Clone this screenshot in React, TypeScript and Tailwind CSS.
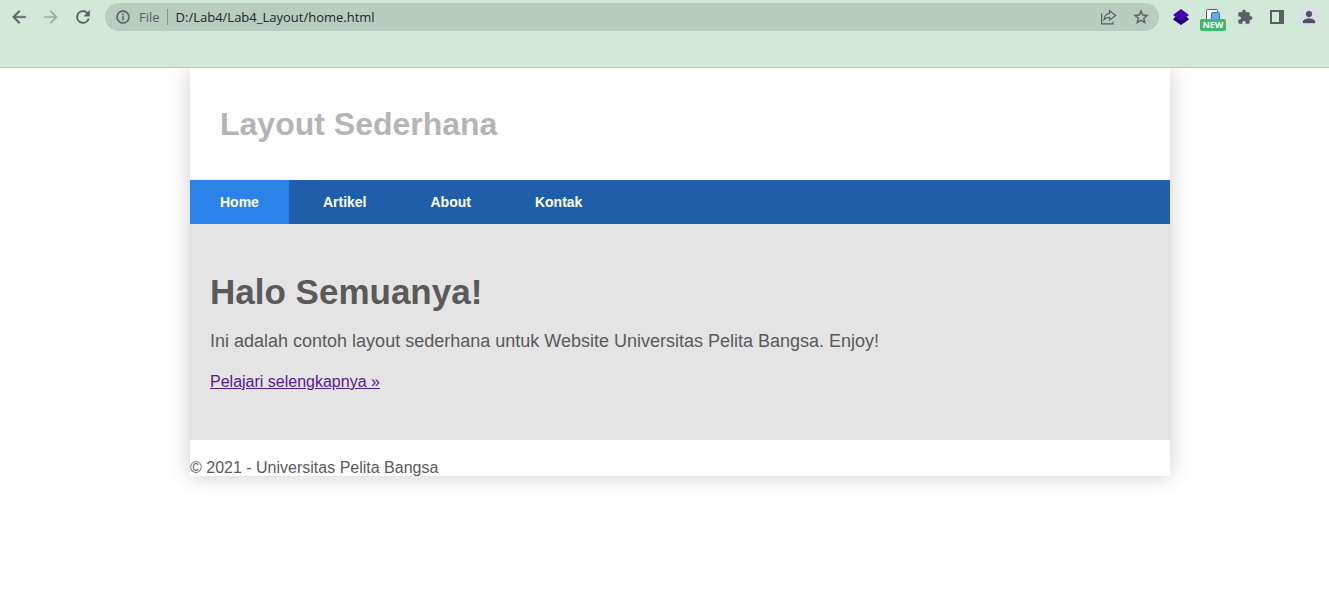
import type { ReactNode } from "react";

function IconButton({ label, className, children }: { label: string; className?: string; children: ReactNode }) {
  return (
    <button type="button" aria-label={label} className={`flex shrink-0 items-center justify-center ${className ?? ""}`}>
      {children}
    </button>
  );
}

function Glyph({ d, className }: { d: string; className: string }) {
  return (
    <svg viewBox="0 0 24 24" fill="currentColor" stroke="currentColor" strokeWidth="0.4" className={className} aria-hidden="true">
      <path d={d} />
    </svg>
  );
}

const BACK = "M20 11H7.83l5.59-5.59L12 4l-8 8 8 8 1.41-1.41L7.83 13H20v-2z";
const FORWARD = "M12 4l-1.41 1.41L16.17 11H4v2h12.17l-5.58 5.59L12 20l8-8z";
const RELOAD =
  "M17.65 6.35A7.96 7.96 0 0 0 12 4a8 8 0 1 0 7.73 10h-2.08A6 6 0 1 1 12 6c1.66 0 3.14.69 4.22 1.78L13 11h7V4z";
const INFO =
  "M11 7h2v2h-2zm0 4h2v6h-2zm1-9a10 10 0 1 0 0 20 10 10 0 0 0 0-20zm0 18a8 8 0 1 1 0-16 8 8 0 0 1 0 16z";
const STAR =
  "M22 9.24l-7.19-.62L12 2 9.19 8.63 2 9.24l5.46 4.73L5.82 21 12 17.27 18.18 21l-1.63-7.03zM12 15.4l-3.76 2.27 1-4.28-3.32-2.88 4.38-.38L12 6.1l1.71 4.04 4.38.38-3.32 2.88 1 4.28z";
const PUZZLE =
  "M20.5 11H19V7c0-1.1-.9-2-2-2h-4V3.5a2.5 2.5 0 0 0-5 0V5H4c-1.1 0-1.99.9-1.99 2v3.8H3.5a2.7 2.7 0 0 1 0 5.4H2V20c0 1.1.9 2 2 2h3.8v-1.5a2.7 2.7 0 0 1 5.4 0V22H17c1.1 0 2-.9 2-2v-4h1.5a2.5 2.5 0 0 0 0-5z";
const PERSON = "M12 12a4 4 0 1 0 0-8 4 4 0 0 0 0 8zm0 2c-2.67 0-8 1.34-8 4v2h16v-2c0-2.66-5.33-4-8-4z";

function BrowserBar() {
  return (
    <header className="h-[68px] border-b border-[#b9cdc0] bg-[#d2e8d9] pt-[3px] font-['Open_Sans','Noto_Sans',sans-serif] text-[#5a5f63]">
      <div className="flex h-7 items-center pr-[10px] pl-[9px]">
        <div className="flex gap-3">
          <IconButton label="Back" className="size-5">
            <Glyph d={BACK} className="size-5" />
          </IconButton>
          <IconButton label="Forward" className="size-5 text-[#9fafa5]">
            <Glyph d={FORWARD} className="size-5" />
          </IconButton>
          <IconButton label="Reload" className="size-5">
            <Glyph d={RELOAD} className="size-5" />
          </IconButton>
        </div>
        <div className="ml-3 flex h-7 min-w-0 flex-1 items-center rounded-full bg-[#b8ccbf] pr-2 pl-[10px]">
          <Glyph d={INFO} className="size-4 shrink-0" />
          <label htmlFor="address" className="ml-2 pt-px text-[13px]">
            File
          </label>
          <span className="mr-2 ml-[7px] h-4 w-px bg-[#84938a]" />
          <input
            id="address"
            type="text"
            defaultValue="D:/Lab4/Lab4_Layout/home.html"
            className="min-w-0 flex-1 bg-transparent pt-px text-[13px] text-[#22272a] outline-none"
          />
          <div className="flex gap-3">
            <IconButton label="Share" className="size-5">
              <svg viewBox="0 0 20 20" fill="none" stroke="currentColor" strokeWidth="1.2" className="size-5" aria-hidden="true">
                <path d="M2.6 6.5v10.3H14v-2.300M10.500 3.700l6.200 4.800-6.200 4.600v-2.700c-2.500 0-4 .6-5.500 2.300.4-3.600 2.300-5.800 5.500-6.300z" />
              </svg>
            </IconButton>
            <IconButton label="Bookmark this page" className="size-5">
              <Glyph d={STAR} className="size-[18px]" />
            </IconButton>
          </div>
        </div>
        <div className="ml-3 flex items-center gap-2">
          <IconButton label="Layers extension" className="size-5">
            <svg viewBox="0 0 20 20" className="size-5" aria-hidden="true">
              <path d="M2 12.600l2.500-3h11l2.500 3-8 5.400z" fill="#23007a" />
              <path d="M10 2l8 6-8 5.800-8-5.800z" fill="#4304b0" />
            </svg>
          </IconButton>
          <button type="button" aria-label="New extension" className="relative h-7 w-7 shrink-0">
            <svg viewBox="0 0 28 28" className="size-7" aria-hidden="true">
              <path d="M7.500 18V7.500q0-1 1-1h9q1 0 1 1V10" fill="#fff" stroke="#4d5966" />
              <rect x="12.500" y="9.500" width="8" height="8" rx="1" fill="#67a8f7" stroke="#3f70b5" />
            </svg>
            <span className="absolute bottom-0 left-1/2 flex h-3 w-[26px] -translate-x-1/2 items-center justify-center rounded-xs bg-[#3cb96a] text-[9px] font-bold text-white">
              NEW
            </span>
          </button>
        </div>
        <div className="ml-2 flex items-center gap-3">
          <IconButton label="Extensions" className="size-5">
            <Glyph d={PUZZLE} className="size-4" />
          </IconButton>
          <IconButton label="Side panel" className="size-5">
            <svg viewBox="0 0 20 20" className="size-5" fill="currentColor" aria-hidden="true">
              <path d="M3 3h14v14H3zM5 5v10h7V5z" fillRule="evenodd" />
            </svg>
          </IconButton>
          <IconButton label="Profile" className="-mx-px size-[22px] rounded-full bg-[#dadfe3] text-[#4b5263]">
            <Glyph d={PERSON} className="size-[18px]" />
          </IconButton>
        </div>
      </div>
    </header>
  );
}

const LINKS = ["Home", "Artikel", "About", "Kontak"];

export default function App() {
  return (
    <div className="flex min-h-screen flex-col bg-white font-['Liberation_Sans',Arial,sans-serif] text-[#5a5a5a]">
      <BrowserBar />
      <div className="overflow-hidden pr-[159px] pb-10 pl-[190px]">
        <div className="max-w-[980px] bg-white shadow-[0_0_20px_rgba(0,0,0,0.2)]">
          <div className="px-[30px] py-8">
            <h1 className="text-[32px] leading-12 font-bold text-[#b5b5b5]">Layout Sederhana</h1>
          </div>
          <nav className="flex gap-1 bg-[#1f5faa] text-sm font-bold text-white">
            {LINKS.map((link) => (
              <a
                key={link}
                href="#"
                aria-current={link === "Home" ? "page" : undefined}
                className="px-[30px] py-3 aria-[current=page]:bg-[#2b83ea]"
              >
                {link}
              </a>
            ))}
          </nav>
          <main className="bg-[#e4e4e4] px-5 pt-12 pb-[46px]">
            <h2 className="text-[35px] leading-10 font-bold">Halo Semuanya!</h2>
            <p className="mt-4 text-lg leading-[26px]">
              Ini adalah contoh layout sederhana untuk Website Universitas Pelita Bangsa. Enjoy!
            </p>
            <p className="mt-4 leading-6">
              <a href="#" className="text-[#551a8b] underline">
                Pelajari selengkapnya »
              </a>
            </p>
          </main>
          <footer className="pt-5">
            <p className="leading-4">© 2021 - Universitas Pelita Bangsa</p>
          </footer>
        </div>
      </div>
    </div>
  );
}
